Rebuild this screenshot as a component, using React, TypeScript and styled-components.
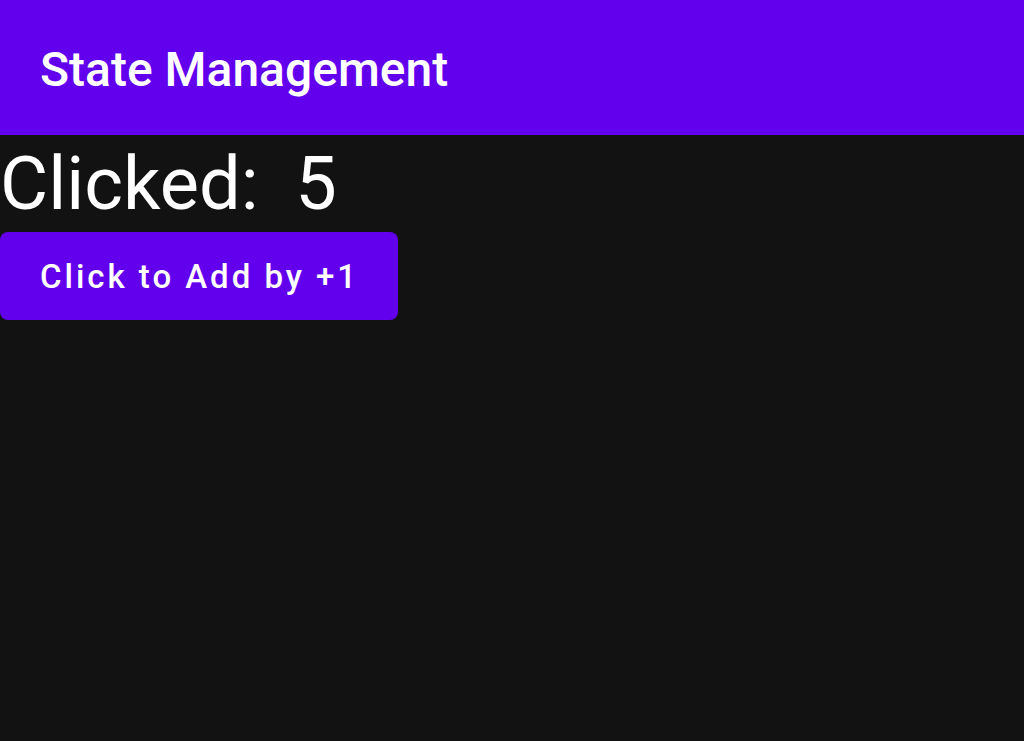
import styled, { createGlobalStyle } from 'styled-components';
import { useState } from 'react';

const GlobalStyle = createGlobalStyle`
  html, body {
    margin: 0;
    padding: 0;
    background: #121212;
  }

  body {
    font-family: Roboto, 'Noto Sans', sans-serif;
    color: #ffffff;
  }
`;

const ScreenStyled = styled.div`
  display: flex;
  flex-direction: column;
  min-height: 741px;
  background: #121212;
`;

const TopBarStyled = styled.header`
  display: flex;
  align-items: center;
  height: 135px;
  padding: 4px 40px 0;
  box-sizing: border-box;
  background: #6200ee;
`;

const TitleStyled = styled.h1`
  margin: 0;
  font-size: 48px;
  font-weight: 500;
  color: #ffffff;
  letter-spacing: 0;
`;

const CounterStyled = styled.div`
  font-size: 74px;
  font-weight: 400;
  line-height: 97px;
  color: #ffffff;
  white-space: pre;
`;

const AddButtonStyled = styled.button`
  display: flex;
  align-items: center;
  width: 398px;
  height: 88px;
  padding: 0 40px;
  border: none;
  border-radius: 8px;
  background: #6200ee;
  color: #ffffff;
  font-family: Roboto, 'Noto Sans', sans-serif;
  font-size: 33px;
  font-weight: 500;
  letter-spacing: 0.09em;
  white-space: nowrap;
  cursor: pointer;
`;

const App = () => {
  const [count, setCount] = useState(5);

  return (
    <>
      <GlobalStyle />
      <ScreenStyled>
        <TopBarStyled>
          <TitleStyled>State Management</TitleStyled>
        </TopBarStyled>
        <CounterStyled>{`Clicked:  ${count}`}</CounterStyled>
        <AddButtonStyled onClick={() => setCount(count + 1)}>
          Click to Add by +1
        </AddButtonStyled>
      </ScreenStyled>
    </>
  );
};

export default App;
